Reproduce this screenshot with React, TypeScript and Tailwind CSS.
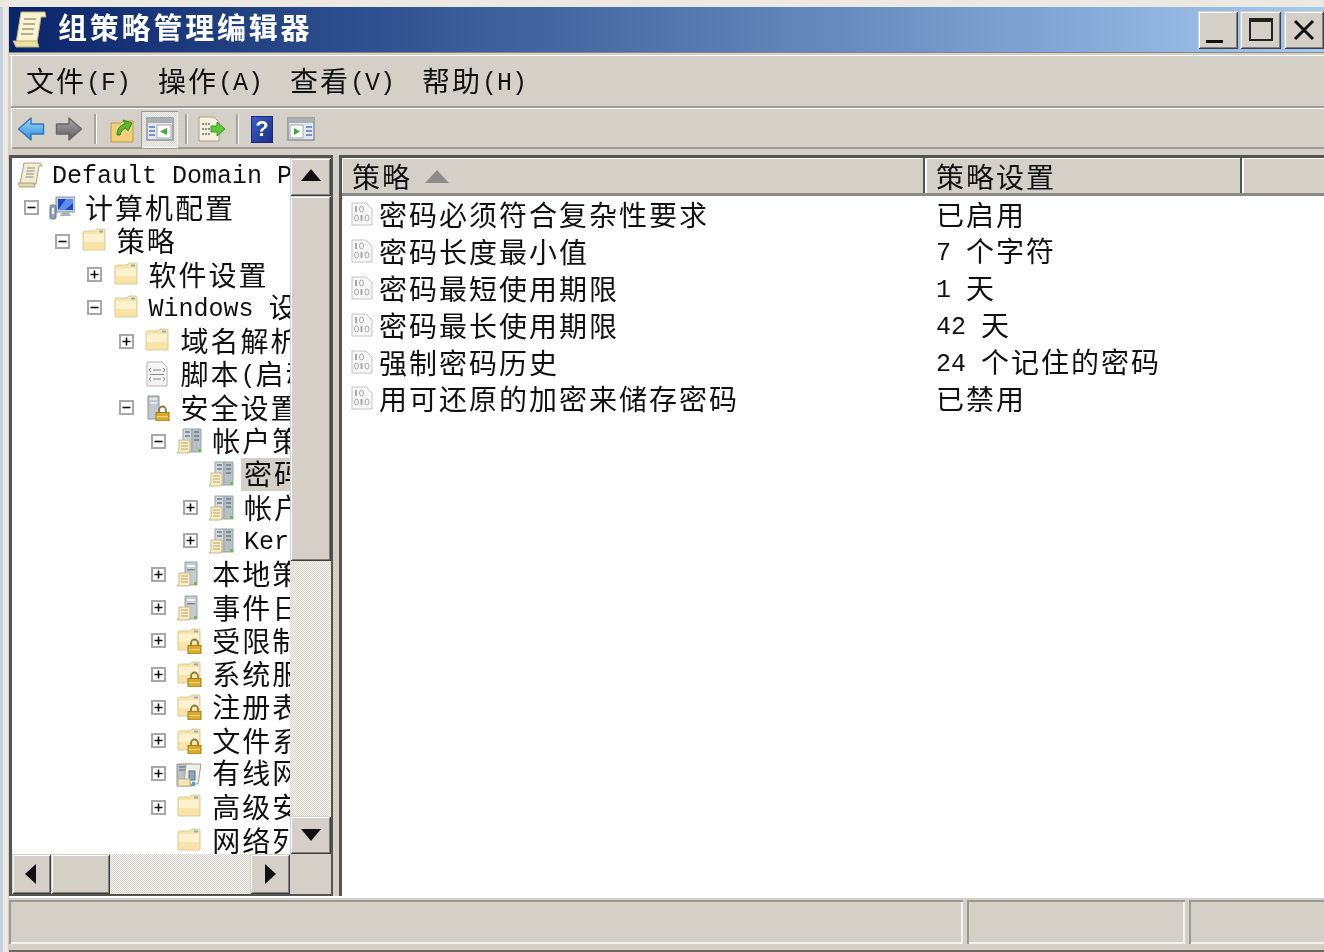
import React from 'react';

type IconName = 'scroll' | 'computer' | 'folder' | 'lockFolder' | 'script' | 'secure' | 'server' | 'tower' | 'wired';

const raised = 'bg-[#d4d0c8] shadow-[inset_1px_1px_0_#d4d0c8,inset_-1px_-1px_0_#404040,inset_2px_2px_0_#ffffff,inset_-2px_-2px_0_#808080]';
const dither = 'bg-[repeating-conic-gradient(#f4f3ef_0_25%,#d8d5ce_0_50%)] bg-[length:2px_2px]';

// latin runs are half width like the old bitmap font, so they get their own size
const Txt: React.FC<{ children: string }> = ({ children }) => (
  <>
    {children.split(/([\x20-\x7e]+)/).filter(Boolean).map((part, i) =>
      /^[\x20-\x7e]+$/.test(part) ? (
        <span key={i} className="font-['Liberation_Mono',monospace] text-[25px] tracking-normal whitespace-pre align-[2px]">{part}</span>
      ) : (
        <span key={i}>{part}</span>
      )
    )}
  </>
);

const Folder = () => (
  <>
    <path d="M2 4.500Q2 3 3.500 3h10.500l2-2h7Q24 1 24 2.500V22H2z" fill="#f9e4a8" stroke="#dccb9c" />
    <path d="M3 6h20v8H3z" fill="#fdf2d0" />
    <rect x="18" y="2.500" width="4" height="2" fill="#7fb2e0" />
  </>
);

const Lock = () => (
  <>
    <path d="M15 18v-3a3.500 3.500 0 0 1 7 0v3" fill="none" stroke="#8a7a3a" strokeWidth="1.800" />
    <rect x="12" y="17.500" width="13" height="8.500" fill="#d9a92c" stroke="#a67f1a" />
    <rect x="13" y="21" width="11" height="1.200" fill="#f2d67a" />
  </>
);

const Doc = () => (
  <>
    <path d="M3 12h11v10l-1 3H1l2-3z" fill="#f6ebc6" stroke="#c9b886" />
    <path d="M5 15h7M5 18h7M5 21h7" stroke="#bda96f" />
  </>
);

const Tower = () => (
  <>
    <path d="M9 1h12v23H9z" fill="#c4ccd2" stroke="#98a2aa" />
    <rect x="11" y="4" width="8" height="2" fill="#f2f4f5" />
    <rect x="11" y="8" width="8" height="1.500" fill="#828d96" />
    <rect x="18" y="21" width="3" height="3" fill="#5ec83c" />
    <Doc />
  </>
);

const DoubleTower = () => (
  <>
    <path d="M7 1h9v23H7z" fill="#d2d8dc" stroke="#9aa3aa" />
    <path d="M16 1h9v23h-9z" fill="#b7c0c7" stroke="#9aa3aa" />
    <path d="M9 4h5M9 8h5M18 4h5M18 8h5M18 12h5" stroke="#6f7a83" strokeWidth="1.500" />
    <rect x="22" y="21" width="3" height="3" fill="#5ec83c" />
    <Doc />
  </>
);

const TreeIcon: React.FC<{ name: IconName }> = ({ name }) => (
  <svg viewBox="0 0 26 26" className="w-[26px] h-[26px] shrink-0">
    {name === 'scroll' && (
      <>
        <path d="M7 1h16l2 3h-3l-3 18H3z" fill="#f4ecd0" stroke="#a8a08a" />
        <path d="M10 6h8M9.500 9h8M9 12h8M8.500 15h8" stroke="#8d8d8d" />
        <path d="M1 21h16l1 4H3z" fill="#e6d9a8" stroke="#a8a08a" />
      </>
    )}
    {name === 'computer' && (
      <>
        <rect x="7" y="2" width="19" height="15" fill="#c7ced4" stroke="#8a949c" />
        <path d="M9 4h15v11H9z" fill="#1846c8" />
        <path d="M9 15l8-11h7v4l-8 7z" fill="#5f8fe8" />
        <path d="M13 17h7l2 4H11z" fill="#aab2b8" />
        <rect x="1" y="10" width="6" height="14" rx="2" fill="#8fa6bc" stroke="#5f7288" />
        <rect x="3" y="13" width="2" height="6" fill="#ffffff" />
      </>
    )}
    {name === 'folder' && <Folder />}
    {name === 'lockFolder' && (
      <>
        <Folder />
        <Lock />
      </>
    )}
    {name === 'script' && (
      <>
        <path d="M3 1h15l5 5v19H3z" fill="#f4f4f4" stroke="#b4b4b4" />
        <path d="M7 7l-2 2 2 2M19 7l2 2-2 2M9 9h8M7 16l-2 2 2 2M19 16l2 2-2 2M9 18h8M6 13.500h14" fill="none" stroke="#858585" />
      </>
    )}
    {name === 'secure' && (
      <>
        <path d="M4 1h11v23H4z" fill="#c0c9cf" stroke="#8a949c" />
        <path d="M6 4h7M6 8h7" stroke="#f0f2f4" strokeWidth="1.500" />
        <Lock />
      </>
    )}
    {name === 'server' && <DoubleTower />}
    {name === 'tower' && <Tower />}
    {name === 'wired' && (
      <>
        <path d="M1 3h15v22H1z" fill="#b9c2c9" stroke="#8a949c" />
        <path d="M3 6h9M3 9h9" stroke="#5f6a73" />
        <path d="M10 3h15l-3 20H8z" fill="#eef0ea" stroke="#a8a08a" />
        <rect x="13" y="10" width="6" height="9" fill="#8ea6ba" stroke="#5f7288" />
        <path d="M2 18h12v7H2z" fill="#f3e6bd" stroke="#c4b078" />
        <rect x="16" y="21" width="3" height="4" fill="#38a8d8" />
      </>
    )}
  </svg>
);

const rows: { level: number; exp?: '+' | '-'; icon: IconName; text: string; selected?: boolean }[] = [
  { level: 0, icon: 'scroll', text: 'Default Domain Policy' },
  { level: 1, exp: '-', icon: 'computer', text: '计算机配置' },
  { level: 2, exp: '-', icon: 'folder', text: '策略' },
  { level: 3, exp: '+', icon: 'folder', text: '软件设置' },
  { level: 3, exp: '-', icon: 'folder', text: 'Windows 设置' },
  { level: 4, exp: '+', icon: 'folder', text: '域名解析策略' },
  { level: 4, icon: 'script', text: '脚本(启动/关机)' },
  { level: 4, exp: '-', icon: 'secure', text: '安全设置' },
  { level: 5, exp: '-', icon: 'server', text: '帐户策略' },
  { level: 6, icon: 'server', text: '密码策略', selected: true },
  { level: 6, exp: '+', icon: 'server', text: '帐户锁定策略' },
  { level: 6, exp: '+', icon: 'server', text: 'Kerberos 策略' },
  { level: 5, exp: '+', icon: 'tower', text: '本地策略' },
  { level: 5, exp: '+', icon: 'tower', text: '事件日志' },
  { level: 5, exp: '+', icon: 'lockFolder', text: '受限制的组' },
  { level: 5, exp: '+', icon: 'lockFolder', text: '系统服务' },
  { level: 5, exp: '+', icon: 'lockFolder', text: '注册表' },
  { level: 5, exp: '+', icon: 'lockFolder', text: '文件系统' },
  { level: 5, exp: '+', icon: 'wired', text: '有线网络(IEEE 802.3)策略' },
  { level: 5, exp: '+', icon: 'folder', text: '高级安全 Windows 防火墙' },
  { level: 5, icon: 'folder', text: '网络列表管理器策略' },
];

const policies = [
  ['密码必须符合复杂性要求', '已启用'],
  ['密码长度最小值', '7 个字符'],
  ['密码最短使用期限', '1 天'],
  ['密码最长使用期限', '42 天'],
  ['强制密码历史', '24 个记住的密码'],
  ['用可还原的加密来储存密码', '已禁用'],
];

const Expander: React.FC<{ kind?: '+' | '-' }> = ({ kind }) => (
  <span className={`w-[15px] h-[15px] shrink-0 flex items-center justify-center ${kind ? 'bg-white border-2 border-[#a8a8a8]' : ''}`}>
    {kind && (
      <svg viewBox="0 0 11 11" className="w-[11px] h-[11px]">
        <path d={kind === '+' ? 'M1.500 5.500h8M5.500 1.500v8' : 'M1.500 5.500h8'} stroke="#111" strokeWidth="1.600" />
      </svg>
    )}
  </span>
);

const TreeRow: React.FC<(typeof rows)[number]> = ({ level, exp, icon, text, selected }) => (
  <div
    className="h-[33.3px] flex items-center whitespace-nowrap shrink-0"
    style={{ paddingLeft: level === 0 ? 5 : 11.5 + 31.8 * (level - 1) }}
  >
    {level > 0 && (
      <span className="mr-[10.5px]">
        <Expander kind={exp} />
      </span>
    )}
    <TreeIcon name={icon} />
    <span className={`h-[33px] flex items-center pb-[2px] ${level === 0 ? 'ml-[6px]' : 'ml-[7px]'} px-[3px] ${selected ? 'bg-[#d4d0c8]' : ''}`}>
      <span>
        <Txt>{text}</Txt>
      </span>
    </span>
  </div>
);

const Tri: React.FC<{ dir: 'up' | 'down' | 'left' | 'right' }> = ({ dir }) => {
  const d = { up: 'M0 14L10 2l10 12z', down: 'M0 4h20L10 16z', left: 'M14 0v20L3 10z', right: 'M5 0v20l11-10z' }[dir];
  return (
    <svg viewBox="0 0 20 20" className="w-[20px] h-[20px]">
      <path d={d} fill="#111" />
    </svg>
  );
};

const Sep = ({ w }: { w: string }) => (
  <div className={`${w} flex justify-center`}>
    <div className="w-[2px] h-[30px] bg-[#a8a49c] shadow-[1px_0_0_#ffffff]" />
  </div>
);

const ArrowIcon: React.FC<{ flip?: boolean; id: string; from: string; to: string; stroke: string }> = ({ flip, id, from, to, stroke }) => (
  <svg viewBox="0 0 28 26" className={`w-[28px] h-[26px] ${flip ? '-scale-x-100' : ''}`}>
    <defs>
      <linearGradient id={id} x1="0" y1="0" x2="0" y2="1">
        <stop offset="0" stopColor={from} />
        <stop offset="1" stopColor={to} />
      </linearGradient>
    </defs>
    <path d="M1.500 13L14 2v6h12.500v10H14v6z" fill={`url(#${id})`} stroke={stroke} strokeWidth="1.400" strokeLinejoin="round" />
  </svg>
);

const PaneIcon: React.FC<{ right?: boolean }> = ({ right }) => (
  <svg viewBox="0 0 28 24" className="w-[28px] h-[24px]">
    <rect x="1" y="1" width="26" height="22" fill="#e4e8ea" stroke="#8d9296" strokeWidth="1.500" />
    <rect x="1" y="1" width="26" height="5" fill="#a9afb3" />
    <path d={right ? 'M3 8h13v13H3z' : 'M11 8h14v13H11z'} fill="#ffffff" stroke="#a4aaae" />
    <path d={right ? 'M7 11v7l6-3.500z' : 'M21 11v7l-7-3.500z'} fill="#3fa83a" />
    <path d={right ? 'M19 10h6M19 14h6M19 18h6' : 'M3 10h6M3 14h6M3 18h6'} stroke="#6f94cc" strokeWidth="2" />
  </svg>
);

const App: React.FC = () => (
  <div className="w-[1324px] h-[952px] overflow-hidden bg-[#c4cfdc] flex flex-col pl-[3px] blur-[0.5px] text-[#111] text-[28px] tracking-[2px] font-['Noto_Sans_CJK_SC','Liberation_Sans',sans-serif]">
    <div className="h-[7px] bg-[#ece9e3] shrink-0 -ml-[3px]" />
    <div className="flex-1 min-h-0 flex flex-col bg-[#d4d0c8] pl-[6px] shadow-[inset_5px_0_0_#ece9e3]">
      {/* Title bar */}
      <div className="h-[45px] shrink-0 flex items-center justify-between bg-gradient-to-r from-[#0a246a] to-[#a6caf0]">
        <div className="flex items-center">
          <svg viewBox="0 0 36 38" className="w-[36px] h-[38px] ml-[3px]">
            <path d="M9 1h24l1 5h-5l-4 26H4z" fill="#fbf3cf" stroke="#b8ac7e" />
            <path d="M12 8h12M11 13h12M10 18h12M9 23h12" stroke="#9a9682" strokeWidth="1.500" />
            <path d="M1 30h24l2 6H4z" fill="#efe0a8" stroke="#b8ac7e" />
          </svg>
          <span className="ml-[10px] pb-[5px] text-white font-bold text-[29px] tracking-[2.8px]">组策略管理编辑器</span>
        </div>
        <div className="flex items-center gap-[2px]">
          <button className={`${raised} w-[40px] h-[38px] flex items-end justify-center pb-[6px] pr-[7px]`}>
            <span className="w-[17px] h-[3px] bg-[#111]" />
          </button>
          <button className={`${raised} w-[41px] h-[38px] flex items-center justify-center`}>
            <span className="w-[24px] h-[23px] border-2 border-t-[4px] border-[#222]" />
          </button>
          <button className={`${raised} w-[40px] h-[38px] ml-[1px] flex items-center justify-center`}>
            <svg viewBox="0 0 22 22" className="w-[22px] h-[22px]">
              <path d="M2 2l18 18M20 2L2 20" stroke="#111" strokeWidth="3" />
            </svg>
          </button>
        </div>
      </div>

      <div className="h-[4px] shrink-0 shadow-[inset_0_1px_0_#8a8a84,inset_0_-1px_0_#ffffff]" />

      {/* Menu */}
      <div className="h-[52px] shrink-0 ml-[2px] flex items-center pl-[15px] shadow-[inset_1px_0_0_#ffffff] border-b-2 border-[#9e9b94]">
        {['文件(F)', '操作(A)', '查看(V)', '帮助(H)'].map((m) => (
          <span key={m} className="w-[132px] whitespace-nowrap">
            <Txt>{m}</Txt>
          </span>
        ))}
      </div>

      {/* Toolbar */}
      <div className="h-[41px] shrink-0 ml-[2px] flex items-center border-t border-white shadow-[inset_1px_0_0_#ffffff,inset_0_-2px_0_#9e9b94]">
        <div className="w-[39px] flex justify-center"><ArrowIcon id="arrowBack" from="#a4dcfa" to="#2a86d8" stroke="#2a78b8" /></div>
        <div className="w-[38px] flex justify-center"><ArrowIcon flip id="arrowFwd" from="#a8a8a8" to="#5e5e5e" stroke="#666666" /></div>
        <Sep w="w-[14px]" />
        <div className="w-[39px] flex justify-center">
          <svg viewBox="0 0 26 28" className="w-[26px] h-[28px]">
            <path d="M2 8h10l2-2h10v21H2z" fill="#f2cf78" stroke="#b89a50" />
            <path d="M8 20c0-6 3-10 8-11l-2-4 9 3-4 8-2-3c-3 1-5 3-6 7z" fill="#5cb82e" stroke="#3a8a20" />
          </svg>
        </div>
        <div className={`w-[37px] h-[37px] flex items-center justify-center ${dither} shadow-[inset_1px_1px_0_#9a9a94,inset_-1px_-1px_0_#ffffff]`}>
          <PaneIcon />
        </div>
        <Sep w="w-[16px]" />
        <div className="w-[34px] flex justify-center">
          <svg viewBox="0 0 28 26" className="w-[28px] h-[26px]">
            <path d="M2 1h15l5 5v19H2z" fill="#f6f0dc" stroke="#a8a08a" />
            <path d="M5 8h9M5 13h9M5 18h9" stroke="#6d6d6d" strokeDasharray="2 1" strokeWidth="1.500" />
            <path d="M14 10h6V6l8 7-8 7v-4h-6z" fill="#5cc83a" stroke="#3a9a28" />
          </svg>
        </div>
        <Sep w="w-[18px]" />
        <div className="w-[32px] flex justify-center">
          <span className="w-[22px] h-[27px] bg-gradient-to-br from-[#3a5fc8] to-[#1a2f8a] border border-[#1a2a70] flex items-center justify-center text-white font-bold text-[22px] leading-none tracking-normal font-['Liberation_Sans',sans-serif]">?</span>
        </div>
        <div className="w-[38px] ml-[4px] flex justify-center"><PaneIcon right /></div>
      </div>

      {/* Panes */}
      <div className="h-[749px] shrink-0 flex pt-[6px] shadow-[inset_0_-2px_0_#ffffff]">
        <div className="w-[324px] shrink-0 h-[741px] flex flex-col border-l-[3px] border-t-[3px] border-[#555550] border-r-[2px] border-b-[2px] bg-white">
          <div className="flex-1 min-h-0 flex">
            <div className="w-[278px] shrink-0 overflow-hidden flex flex-col">
              {rows.map((r, i) => (
                <TreeRow key={i} {...r} />
              ))}
            </div>
            <div className={`flex-1 flex flex-col ${dither}`}>
              <button className={`${raised} h-[38px] shrink-0 flex items-center justify-center`}><Tri dir="up" /></button>
              <div className={`${raised} h-[365px] shrink-0`} />
              <div className="flex-1" />
              <button className={`${raised} h-[38px] shrink-0 flex items-center justify-center`}><Tri dir="down" /></button>
            </div>
          </div>
          <div className="h-[40px] shrink-0 flex">
            <button className={`${raised} w-[39px] flex items-center justify-center`}><Tri dir="left" /></button>
            <div className={`${raised} w-[59px]`} />
            <div className={`w-[140px] ${dither}`} />
            <button className={`${raised} w-[40px] flex items-center justify-center`}><Tri dir="right" /></button>
            <div className="flex-1 bg-[#d4d0c8]" />
          </div>
        </div>

        <div className="w-[6px] shrink-0" />

        <div className="flex-1 min-w-0 h-[741px] flex flex-col border-l-[3px] border-t-[3px] border-[#555550] bg-white">
          <div className="h-[38px] shrink-0 flex bg-[#d4d0c8] border-b-[3px] border-[#8a8a84]">
            <div className="w-[583px] shrink-0 pl-[10px] flex items-center border-r-[2px] border-[#555550] shadow-[inset_1px_1px_0_#ffffff]">
              策略
              <svg viewBox="0 0 24 14" className="w-[24px] h-[14px] ml-[13px]">
                <path d="M0 14L12 1l12 13z" fill="#8c8c8c" />
              </svg>
            </div>
            <div className="w-[317px] shrink-0 pl-[11px] flex items-center border-r-[2px] border-[#555550] shadow-[inset_2px_1px_0_#ffffff]">策略设置</div>
            <div className="flex-1 shadow-[inset_2px_1px_0_#ffffff]" />
          </div>
          <div>
            {policies.map(([name, value]) => (
              <div key={name} className="h-[36.8px] flex items-center whitespace-nowrap">
                <div className="w-[594px] shrink-0 flex items-center pl-[9px]">
                  <svg viewBox="0 0 22 24" className="w-[22px] h-[24px] shrink-0 mr-[6px]">
                    <path d="M1 1h14l6 6v16H1z" fill="#f7f7f7" stroke="#c4c4c4" />
                    <rect x="4" y="4" width="2" height="6" fill="#a8a8a8" />
                    <ellipse cx="10.500" cy="7" rx="2" ry="3" fill="none" stroke="#a8a8a8" />
                    <ellipse cx="5.500" cy="16" rx="2" ry="3" fill="none" stroke="#a8a8a8" />
                    <rect x="9.500" y="13" width="2" height="6" fill="#a8a8a8" />
                    <ellipse cx="16" cy="16" rx="2" ry="3" fill="none" stroke="#a8a8a8" />
                  </svg>
                  <span><Txt>{name}</Txt></span>
                </div>
                <span><Txt>{value}</Txt></span>
              </div>
            ))}
          </div>
        </div>
      </div>

      {/* Status bar */}
      <div className="flex-1 min-h-0 flex gap-[4px] pt-[2px] pb-[6px] border-b-2 border-[#6a6a64]">
        <div className="w-[954px] shadow-[inset_2px_2px_0_#9a9a94,inset_-2px_-2px_0_#f4f3ef]" />
        <div className="w-[218px] shadow-[inset_2px_2px_0_#9a9a94,inset_-2px_-2px_0_#f4f3ef]" />
        <div className="flex-1 shadow-[inset_2px_2px_0_#9a9a94,inset_0_-2px_0_#f4f3ef]" />
      </div>
    </div>
  </div>
);

export default App;
